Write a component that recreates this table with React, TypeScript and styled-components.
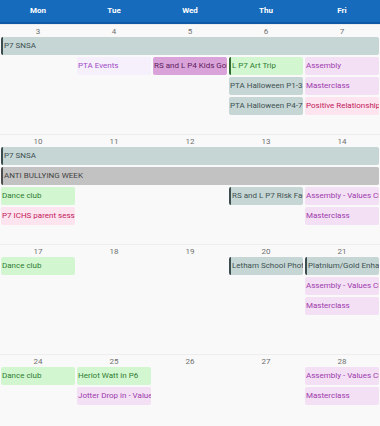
import React from "react";
import styled, { createGlobalStyle, css } from "styled-components";

const GlobalStyle = createGlobalStyle`
  body {
    margin: 0;
    background: #f9f9f9;
    font-family: Roboto, "Liberation Sans", Arial, sans-serif;
  }
`;

type Tone = "slate" | "grey" | "green" | "pink" | "lilac" | "pale" | "orchid";

const tones: Record<Tone, { bg: string; fg: string; bar: string }> = {
  slate: { bg: "#c6d6d5", fg: "#3f5252", bar: "#3b4d4f" },
  grey: { bg: "#c2c2c2", fg: "#424242", bar: "#4e4e4e" },
  green: { bg: "#d2f6cf", fg: "#2e7d32", bar: "#2e6b2f" },
  pink: { bg: "#fde4ef", fg: "#c2185b", bar: "#c2185b" },
  lilac: { bg: "#f4e0f5", fg: "#9c3aab", bar: "#9c3aab" },
  pale: { bg: "#f6effc", fg: "#a04dc4", bar: "#a04dc4" },
  orchid: { bg: "#d9a3d9", fg: "#5e1a5e", bar: "#5e1a5e" },
};

const Calendar = styled.div`
  width: 380px;
  height: 426px;
  overflow: hidden;
`;

const HeaderRow = styled.div`
  display: grid;
  grid-template-columns: repeat(5, 1fr);
  height: 22px;
  background: #176bbd;
  border-bottom: 2px solid #0f5aa6;
`;

const DayName = styled.div`
  display: flex;
  align-items: center;
  justify-content: center;
  color: #ffffff;
  font-size: 8px;
  font-weight: 700;
  padding-bottom: 1px;
`;

const Week = styled.div`
  display: grid;
  grid-template-columns: repeat(5, 1fr);
  grid-template-rows: 10px;
  grid-auto-rows: 18px;
  row-gap: 2px;
  height: 110px;
  box-sizing: border-box;
  border-top: 1px solid #ededed;
  &:first-of-type {
    border-top: none;
  }
`;

const DayNumber = styled.div<{ $col: number }>`
  grid-row: 1;
  grid-column: ${(p) => p.$col};
  text-align: center;
  font-size: 8px;
  line-height: 12px;
  padding-top: 1px;
  color: #707070;
`;

const Event = styled.div<{
  $col: number;
  $span: number;
  $row: number;
  $tone: Tone;
  $bar?: boolean;
  $bold?: boolean;
}>`
  grid-column: ${(p) => p.$col} / span ${(p) => p.$span};
  grid-row: ${(p) => p.$row + 1};
  margin: 0 1px;
  padding-left: 1px;
  border-radius: 2px;
  overflow: hidden;
  white-space: nowrap;
  font-size: 8px;
  line-height: 18px;
  background: ${(p) => tones[p.$tone].bg};
  color: ${(p) => tones[p.$tone].fg};
  font-weight: ${(p) => (p.$bold ? 500 : 400)};
  ${(p) =>
    p.$bar &&
    css`
      border-left: 2px solid ${tones[p.$tone].bar};
      padding-left: 1px;
    `}
`;

type Ev = {
  col: number;
  span?: number;
  row: number;
  tone: Tone;
  text: string;
  bar?: boolean;
  bold?: boolean;
};

const weeks: { days: number[]; events: Ev[] }[] = [
  {
    days: [3, 4, 5, 6, 7],
    events: [
      { col: 1, span: 5, row: 1, tone: "slate", text: "P7 SNSA", bar: true },
      { col: 2, row: 2, tone: "pale", text: "PTA Events" },
      { col: 3, row: 2, tone: "orchid", text: "RS and L P4 Kids Going Wild" },
      { col: 4, row: 2, tone: "green", text: "L P7 Art Trip", bar: true },
      { col: 5, row: 2, tone: "lilac", text: "Assembly" },
      { col: 4, row: 3, tone: "slate", text: "PTA Halloween P1-3" },
      { col: 5, row: 3, tone: "lilac", text: "Masterclass" },
      { col: 4, row: 4, tone: "slate", text: "PTA Halloween P4-7" },
      { col: 5, row: 4, tone: "pink", text: "Positive Relationships" },
    ],
  },
  {
    days: [10, 11, 12, 13, 14],
    events: [
      { col: 1, span: 5, row: 1, tone: "slate", text: "P7 SNSA", bar: true },
      { col: 1, span: 5, row: 2, tone: "grey", text: "ANTI BULLYING WEEK", bar: true },
      { col: 1, row: 3, tone: "green", text: "Dance club" },
      { col: 4, row: 3, tone: "slate", text: "RS and L P7 Risk Factors", bar: true },
      { col: 5, row: 3, tone: "lilac", text: "Assembly - Values Class" },
      { col: 1, row: 4, tone: "pink", text: "P7 ICHS parent session" },
      { col: 5, row: 4, tone: "lilac", text: "Masterclass" },
    ],
  },
  {
    days: [17, 18, 19, 20, 21],
    events: [
      { col: 1, row: 1, tone: "green", text: "Dance club" },
      { col: 4, row: 1, tone: "slate", text: "Letham School Photos", bar: true },
      { col: 5, row: 1, tone: "slate", text: "Platnium/Gold Enhanced", bar: true },
      { col: 5, row: 2, tone: "lilac", text: "Assembly - Values Class" },
      { col: 5, row: 3, tone: "lilac", text: "Masterclass" },
    ],
  },
  {
    days: [24, 25, 26, 27, 28],
    events: [
      { col: 1, row: 1, tone: "green", text: "Dance club" },
      { col: 2, row: 1, tone: "green", text: "Heriot Watt in P6" },
      { col: 5, row: 1, tone: "lilac", text: "Assembly - Values Class" },
      { col: 2, row: 2, tone: "lilac", text: "Jotter Drop in - Values" },
      { col: 5, row: 2, tone: "lilac", text: "Masterclass" },
    ],
  },
];

const dayNames = ["Mon", "Tue", "Wed", "Thu", "Fri"];

export default function App() {
  return (
    <>
      <GlobalStyle />
      <Calendar>
        <HeaderRow>
          {dayNames.map((d) => (
            <DayName key={d}>{d}</DayName>
          ))}
        </HeaderRow>
        {weeks.map((w, i) => (
          <Week key={i}>
            {w.days.map((d, j) => (
              <DayNumber key={d} $col={j + 1}>
                {d}
              </DayNumber>
            ))}
            {w.events.map((e, k) => (
              <Event
                key={k}
                $col={e.col}
                $span={e.span ?? 1}
                $row={e.row}
                $tone={e.tone}
                $bar={e.bar}
                $bold={e.bold}
              >
                {e.text}
              </Event>
            ))}
          </Week>
        ))}
      </Calendar>
    </>
  );
}
